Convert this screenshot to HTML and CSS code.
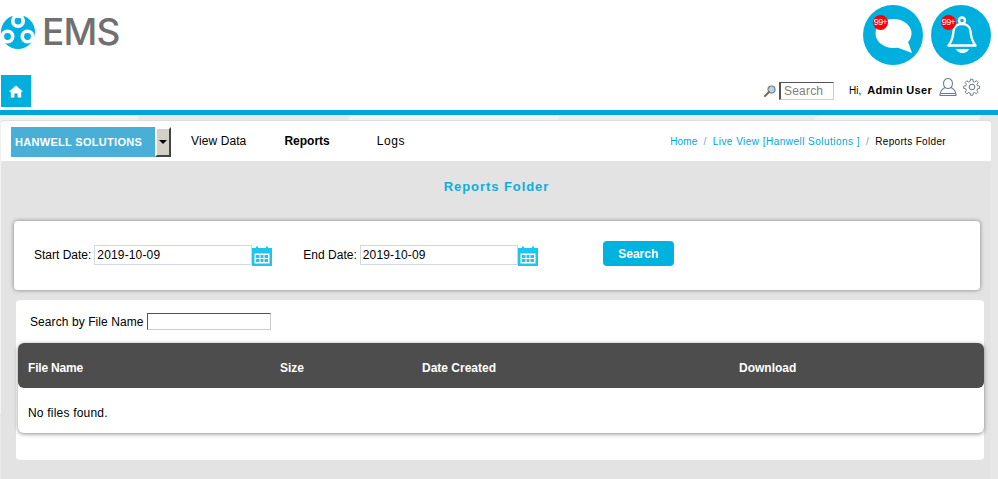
FILE: index.html
```html
<!DOCTYPE html>
<html lang="en">
<head>
<meta charset="utf-8">
<title>EMS Reports Folder</title>
<link rel="stylesheet" href="styles.css">
</head>
<body>
<header class="header">
  <div class="header-top">
    <div class="logo">
      <svg class="logo-mark" viewBox="0 0 34 34" width="34" height="34">
        <circle cx="17" cy="17" r="17" fill="#00b0de"/>
        <circle cx="17" cy="6" r="7" fill="#fff"/><circle cx="17" cy="6" r="3.400" fill="#00b0de"/>
        <path d="M11.500 0 H22.500 V3 H11.500 Z" fill="#fff"/>
        <circle cx="6.500" cy="21.500" r="7" fill="#fff"/><circle cx="6.500" cy="21.500" r="3.400" fill="#00b0de"/>
        <circle cx="26.500" cy="21.500" r="7" fill="#fff"/><circle cx="26.500" cy="21.500" r="3.400" fill="#00b0de"/>
      </svg>
      <span class="logo-text">EMS</span>
    </div>
    <div class="alerts">
      <div class="alert">
        <svg viewBox="0 0 60 60" width="60" height="60" fill="#fff">
          <ellipse cx="30.500" cy="28.500" rx="18" ry="14.500"/>
          <path d="M44 34 L49 48 L33 42 Z"/>
        </svg>
        <span class="badge">99+</span>
      </div>
      <div class="alert">
        <svg viewBox="0 0 60 60" width="60" height="60" fill="none" stroke="#fff" stroke-width="2.400">
          <circle cx="31" cy="15.500" r="3"/>
          <path d="M17.500 40.500 C22 35 22 31 22.500 26 C23 21 27 19 31 19 C35 19 39 21 39.500 26 C40 31 40 35 44.500 40.500 Z" stroke-linejoin="round"/>
          <path d="M25 44 H38 C36.500 49.500 26.500 49.500 25 44 Z" fill="#fff" stroke="none"/>
        </svg>
        <span class="badge">99+</span>
      </div>
    </div>
  </div>
  <div class="header-bottom">
    <a class="home-btn" href="#" aria-label="Home">
      <svg viewBox="0 0 14 13" width="14" height="13"><path d="M7 0.500 L14 6.500 L12.200 6.800 V12.500 H8.600 V8.500 H5.400 V12.500 H1.800 V6.800 L0 6.500 Z" fill="#fff"/></svg>
    </a>
    <div class="tools">
      <svg class="search-icon" viewBox="0 0 12 12" width="12" height="12">
        <circle cx="7.500" cy="4.500" r="3.500" fill="#b9d3e4" stroke="#6d7f8c" stroke-width="1.200"/>
        <path d="M5 7 L1 11" stroke="#7a6a50" stroke-width="2" stroke-linecap="round"/>
      </svg>
      <input class="top-search" type="text" placeholder="Search">
      <span class="greeting">Hi,</span>
      <span class="username">Admin User</span>
      <svg class="user-icon" viewBox="0 0 18 18" width="18" height="18" fill="none" stroke="#6f7d8a" stroke-width="1.100">
        <ellipse cx="9" cy="5.500" rx="4.500" ry="5"/>
        <path d="M6 9.500 C3 11 1 13 1 17.500 H17 C17 13 15 11 12 9.500"/>
        <path d="M2 15.500 H16"/>
      </svg>
      <svg class="gear-icon" viewBox="0 0 24 24" width="18" height="18" fill="none" stroke="#5f6b75" stroke-width="1.300">
        <circle cx="12" cy="12" r="3.800"/>
        <path d="M10.300 1.500h3.400l.6 3.200 2 .8 2.700-1.800 2.400 2.400-1.800 2.700.8 2 3.100.6v3.400l-3.100.6-.8 2 1.800 2.700-2.400 2.400-2.700-1.800-2 .8-.6 3.100h-3.400l-.6-3.100-2-.8-2.700 1.800-2.400-2.400 1.800-2.700-.8-2-3.100-.6v-3.400l3.100-.6.800-2-1.800-2.700 2.400-2.400 2.700 1.800 2-.8z" stroke-linejoin="round" transform="translate(12 12) scale(.92) translate(-12.500 -12.700)"/>
      </svg>
    </div>
  </div>
</header>
<div class="stage">
  <main class="panel">
    <nav class="nav">
      <div class="site-select">
        <span class="site-name">HANWELL SOLUTIONS</span>
        <span class="site-arrow"></span>
      </div>
      <a class="nav-link nav-view" href="#">View Data</a>
      <a class="nav-link nav-reports" href="#">Reports</a>
      <a class="nav-link nav-logs" href="#">Logs</a>
      <div class="crumbs">
        <a class="crumb-home" href="#">Home</a><i>/</i><a href="#">Live View [Hanwell Solutions ]</a><i>/</i><span>Reports Folder</span>
      </div>
    </nav>
    <div class="content">
      <h1 class="title">Reports Folder</h1>
      <section class="card filter">
        <label class="field-label">Start Date:</label>
        <input class="date-input" type="text" value="2019-10-09">
        <svg class="cal" viewBox="0 0 20 20" width="20" height="20"><use href="#calendar"/></svg>
        <label class="field-label end-label">End Date:</label>
        <input class="date-input" type="text" value="2019-10-09">
        <svg class="cal" viewBox="0 0 20 20" width="20" height="20"><use href="#calendar"/></svg>
        <button class="search-btn" type="button">Search</button>
      </section>
      <section class="files">
        <div class="file-search">
          <label class="file-label">Search by File Name</label>
          <input class="file-input" type="text">
        </div>
        <div class="table">
          <div class="table-head">
            <span class="col-name">File Name</span>
            <span class="col-size">Size</span>
            <span class="col-date">Date Created</span>
            <span>Download</span>
          </div>
          <div class="table-body">No files found.</div>
        </div>
      </section>
    </div>
  </main>
</div>
<svg class="defs" width="0" height="0" aria-hidden="true">
  <symbol id="calendar" viewBox="0 0 20 20">
    <path d="M0 2 H20 V20 H0 Z" fill="#1cc6ec"/>
    <path d="M4 0.500 H6 V3.500 H4 Z M14 0.500 H16 V3.500 H14 Z" fill="#1cc6ec"/>
    <path d="M2.500 7.500 H17.500 V17.500 H2.500 Z" fill="#fff"/>
    <path d="M4 9 H7.500 V12 H4 Z M8.500 9 H11.500 V12 H8.500 Z M12.500 9 H16 V12 H12.500 Z M4 13 H7.500 V16 H4 Z M8.500 13 H11.500 V16 H8.500 Z M12.500 13 H16 V16 H12.500 Z" fill="#1cc6ec"/>
  </symbol>
</svg>
</body>
</html>
```
FILE: styles.css
```css
* { box-sizing: border-box; }
html, body { margin: 0; height: 479px; overflow: hidden; }
body { background: #fff; font-family: "Liberation Sans", Arial, sans-serif; font-size: 12px; color: #000; }
a { text-decoration: none; color: inherit; }
.defs { display: block; height: 0; }

.header { height: 115px; background: #fff; border-bottom: 5px solid #00a5d9; }
.header-top { height: 75px; display: flex; justify-content: space-between; padding: 5px 7px 0 1px; }
.logo { display: flex; align-items: flex-start; padding-top: 10px; gap: 7px; }
.logo-mark { display: block; }
.logo-text { font-family: Inter, sans-serif; font-weight: 500; font-size: 37px; line-height: 34px; color: #707070; letter-spacing: -0.8px; }
.alerts { display: flex; gap: 8px; }
.alert { position: relative; width: 60px; height: 60px; border-radius: 50%; background: #00afdd; }
.alert svg { display: block; }
.badge { position: absolute; left: 10px; top: 10px; width: 15px; height: 15px; border-radius: 50%; background: #f00; color: #fff; font-size: 9px; line-height: 15px; text-align: center; letter-spacing: -0.6px; }
.header-bottom { height: 35px; display: flex; justify-content: space-between; padding: 0 17px 0 1px; }
.home-btn { width: 30px; height: 32px; background: #00afdd; display: flex; align-items: center; justify-content: center; }
.tools { display: flex; align-items: flex-start; }
.search-icon { margin: 10px 3px 0 0; }
.top-search { width: 55px; height: 18px; margin-top: 7px; padding: 0 3px; border: 2px solid; border-color: #555 #ccc #ccc #555; border-width: 1px 1px 1px 2px; background: #fff; font: 12px "Liberation Sans", sans-serif; letter-spacing: 0.2px; outline: 0; }
.top-search::placeholder { color: #808080; opacity: 1; }
.greeting { margin: 10px 0 0 15px; font-size: 10px; line-height: 12px; }
.username { margin: 9px 0 0 6px; font-size: 11px; line-height: 13px; font-weight: 700; letter-spacing: 0.3px; }
.user-icon { margin: 3px 0 0 7px; }
.gear-icon { margin: 3px 0 0 6px; }

.stage { height: 364px; padding: 6px 7px 0 1px; background: #efefef linear-gradient(115deg, #f3f3f3 0 12%, #e9e9e9 12% 30%, #f4f4f4 30% 48%, #ececec 48% 70%, #f4f4f4 70% 84%, #e7e7e7 84%); }
.panel { height: 358px; background: #e3e3e3; }
.nav { height: 40px; background: #fff; border-radius: 3px 3px 0 0; box-shadow: 0 -1px 1px #ddd; display: flex; align-items: center; padding: 0 45px 0 10px; }
.site-select { width: 160px; height: 30px; margin-top: 2px; display: flex; background: #4aafd6; }
.site-name { flex: 1; padding-left: 4px; color: #fff; font-size: 11px; font-weight: 700; line-height: 30px; letter-spacing: 0.3px; }
.site-arrow { position: relative; width: 16px; border: 2px solid; border-color: #fff #444 #444 #fff; background: #d4d0c8; }
.site-arrow::after { content: ""; position: absolute; left: 2px; top: 11px; border: 4px solid transparent; border-top-color: #000; border-bottom: 0; }
.nav-link { font-size: 12px; }
.nav-view { margin-left: 20px; letter-spacing: 0.1px; }
.nav-reports { margin-left: 38px; font-weight: 700; }
.nav-logs { margin-left: 47px; letter-spacing: 0.6px; }
.crumbs { margin-left: auto; font-size: 10px; letter-spacing: 0.47px; color: #00a5d9; }
.crumbs i { font-style: normal; margin: 0 6px; color: #6aa9c9; }
.crumbs span { color: #000; letter-spacing: 0.33px; }
.crumb-home { letter-spacing: 0.13px; }

.title { margin: 0; padding: 18px 0 0 1px; height: 60px; text-align: center; font-size: 13px; line-height: 15px; letter-spacing: 0.93px; color: #10acdc; }
.card { background: #fff; border-radius: 4px; box-shadow: 0 0 4px rgba(0,0,0,.45); }
.filter { margin-left: 13px; width: 966px; height: 69px; display: flex; align-items: flex-start; padding: 24px 0 0 20px; }
.field-label { line-height: 20px; white-space: nowrap; }
.date-input { width: 158px; height: 20px; margin-left: 3px; padding: 0 2px; border: 1px solid #d4d6ea; background: #fff; font: 12px "Liberation Sans", sans-serif; letter-spacing: 0.15px; color: #000; outline: 0; }
.cal { display: block; margin-top: 1px; }
.end-label { margin-left: 31px; }
.search-btn { margin: -4px 0 0 65px; width: 71px; height: 25px; padding: 0; border: 0; border-radius: 4px; background: #00b3df; color: #fff; font: 700 12px "Liberation Sans", sans-serif; }
.files { margin: 10px 0 0 15px; width: 968px; height: 160px; background: #fff; border-radius: 4px; padding: 13px 0 0 2px; }
.file-search { display: flex; align-items: center; height: 17px; padding-left: 12px; }
.file-label { letter-spacing: 0.08px; }
.file-input { width: 124px; height: 17px; margin-left: 3px; border: 1px solid; border-color: #555 #ccc #ccc #555; background: #fff; outline: 0; }
.table { margin-top: 13px; width: 966px; height: 90px; background: #fff; border-radius: 6px; box-shadow: 0 1px 4px rgba(0,0,0,.45); }
.table-head { height: 45px; display: flex; align-items: center; padding: 5px 0 0 10px; background: #4d4d4d; border-radius: 6px; color: #fff; font-weight: 700; font-size: 12px; }
.col-name { width: 252px; letter-spacing: -0.2px; }
.col-size { width: 142px; }
.col-date { width: 317px; }
.table-body { padding-left: 10px; line-height: 50px; letter-spacing: 0.2px; }
```
